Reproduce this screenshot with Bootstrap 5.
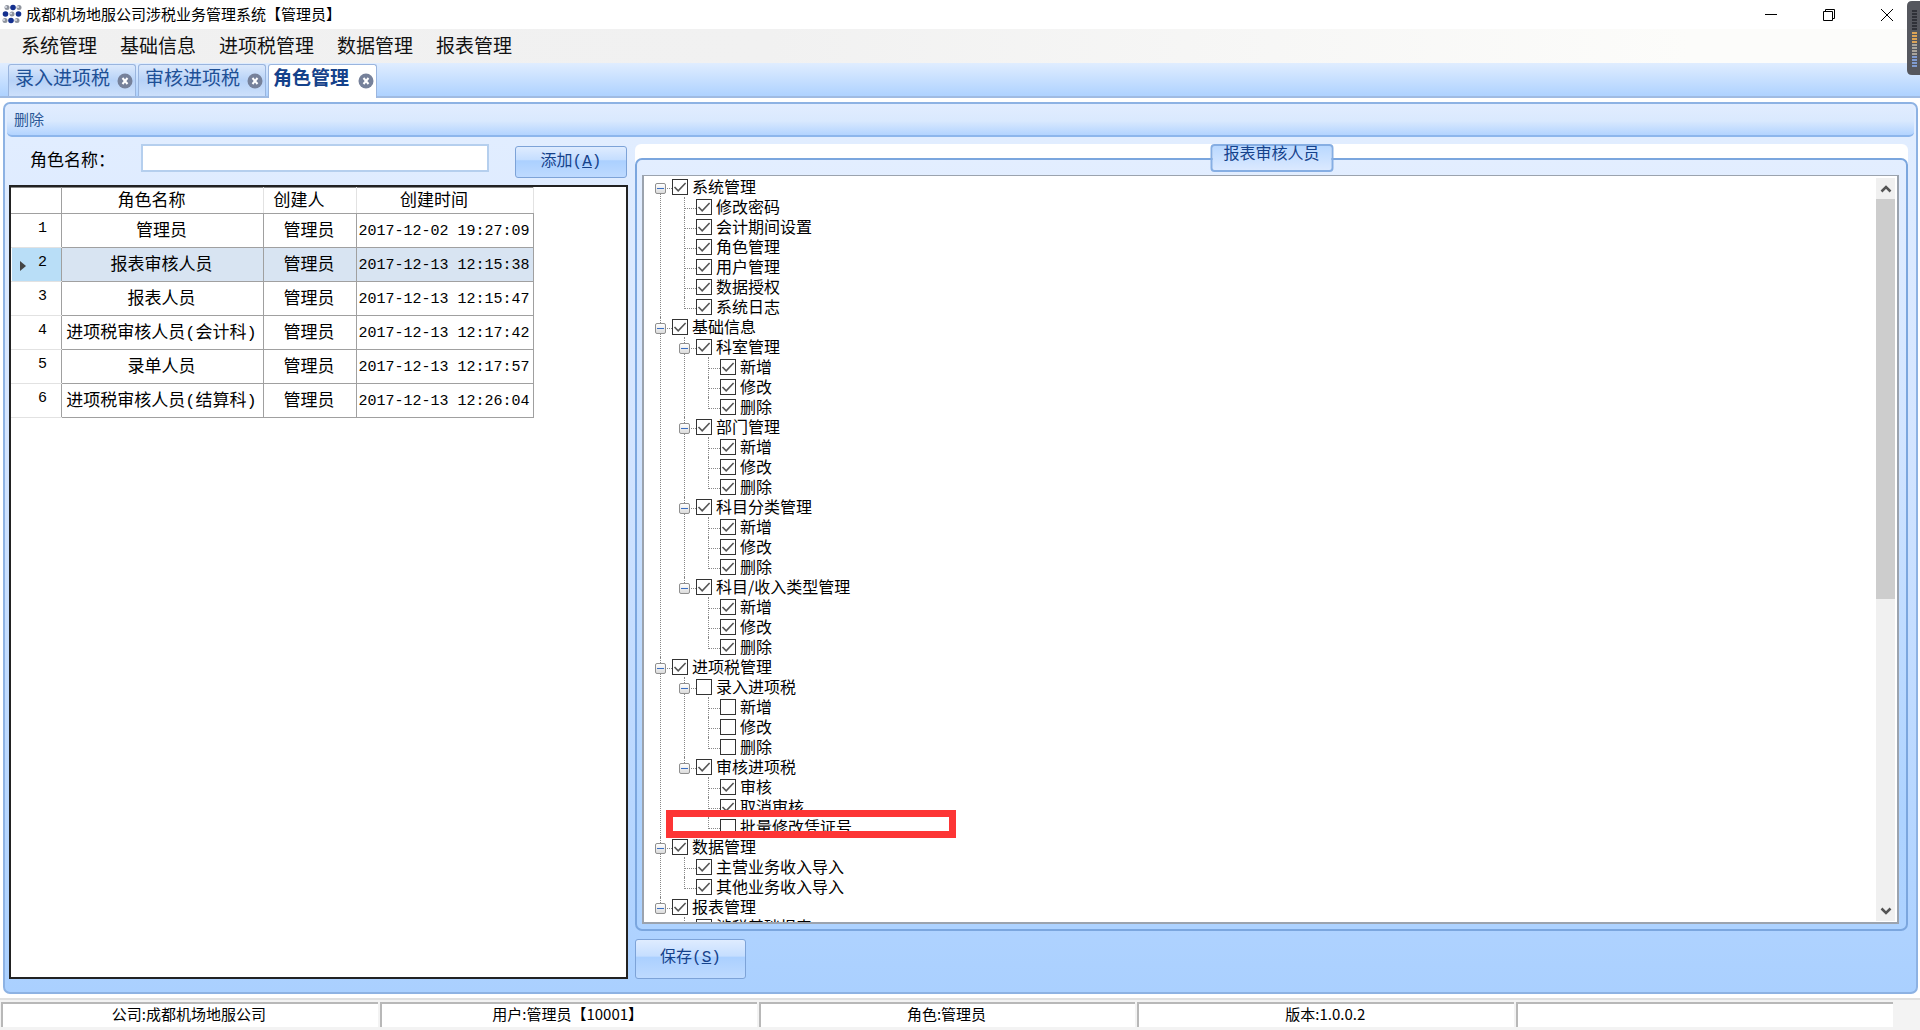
<!DOCTYPE html>
<html lang="zh-CN">
<head>
<meta charset="utf-8">
<meta name="viewport" content="width=device-width, initial-scale=1">
<title>成都机场地服公司涉税业务管理系统</title>
<link href="https://cdn.jsdelivr.net/npm/bootstrap@5.3.0/dist/css/bootstrap.min.css" rel="stylesheet">
<style>
:root{--edge:#8db2e3;--ink:#15428b}
body{font-family:"Noto Sans CJK SC",sans-serif;font-size:16px;line-height:20px;color:#000;background:#fff;height:100vh;overflow:hidden}
button,input{font-family:inherit}
.titlebar{height:29px;font-size:15px;padding:0 4px 2px 2px}
.win-btn{width:58px;height:27px;border:0;background:none;padding:0}
.menubar{height:34px;font-size:19px;line-height:32px;background:linear-gradient(90deg,#f0f0f0 0,#f1f1f1 40%,#fcfcfa 88%);padding-left:10px}
.menubar a{color:#111;padding:0 12px 0 11px}
.tabstrip{height:35px;background:linear-gradient(#e0edff,#aed2ff);border-bottom:2px solid #a0bbe2;padding:1px 8px 0;gap:2px}
.doc-tab{height:34px;padding:0 2px 0 6px;margin-bottom:-2px;border:1px solid #9ab5de;border-bottom:0;border-radius:3px 3px 0 0;background:linear-gradient(#dce9fc,#b7d2f7 50%,#cde0fb);background-clip:padding-box;color:#1e5096;font-size:19px;line-height:24px;gap:7px}
.doc-tab:not(.active){height:32px;margin-bottom:0}
.doc-tab a{color:inherit}
.doc-tab.active{background:#fff;color:var(--ink);font-weight:700;padding-left:4px;gap:9px}
.tab-x{width:16px;height:16px;border:0;background:none;padding:0;margin-top:8px;line-height:0}
.workspace{margin:4px 2px 4px 3px;border:2px solid var(--edge);border-radius:7px;background:linear-gradient(#e1edff 4%,#d6e6ff 35%,#b6d6ff 82%,#aad0ff)}
.toolbar{height:33px;margin-left:2px;margin-right:2px;background:linear-gradient(#e2edff,#d9e9fe 55%,#b3d4ff);border-bottom:2px solid #8db6ec;border-radius:5px;padding:0 7px;line-height:30px;font-size:15px}
.toolbar a{color:#2a5896}
.panes{padding:7px 8px 13px 4px;gap:7px}
.pane-left{flex:0 0 619px;min-width:0}
.add-row{padding:0 1px 8px 21px;height:41px}
.add-row label{font-size:17px;width:111px;line-height:29px}
.name-box{width:348px;height:28px;border:2px solid #b5cfee;border-radius:0;padding:0 6px}
.glass{border:1px solid #7da3d8;border-radius:3px;background:linear-gradient(#dfecff,#c5deff 42%,#abd0ff 46%,#bedaff);color:var(--ink);font-family:"Liberation Mono","Noto Sans CJK SC",monospace;font-size:16px;padding:0}
.glass:hover{border-color:#5c8acb;color:var(--ink)}
.add-btn{width:112px;height:32px;margin-top:2px}
.save-btn{width:111px;height:40px;padding-bottom:2px}
.grid-box{background:#fff;border:2px solid #222}
.roles{width:522px;table-layout:fixed;font-family:"Liberation Mono","Noto Sans CJK SC",monospace;font-size:17px;line-height:20px;margin:0;border-collapse:collapse}
.roles th,.roles td{padding:2px 2px 0 0;text-align:center;vertical-align:middle;border:1px solid #a0a0a0;font-weight:400;white-space:nowrap}
.roles thead th{height:26px;border-color:#e2e2e2;border-top-color:#888;border-bottom-color:#a0a0a0;padding-right:22px}
.roles tbody tr{height:34px}
.roles tbody th{border-color:#e2e2e2 #a0a0a0 #e2e2e2 #fff;font-size:15px;padding:0 0 4px 12px;position:relative}
.roles thead th:first-child{border-left-color:#fff;border-right-color:#a0a0a0}
.roles .stamp{font-size:15px}
.roles .picked td{background:#d8e4f2}
.roles .picked th{background:#b9def7}
.row-arrow{position:absolute;left:7px;top:12px}
.group-wrap{background:linear-gradient(#fff,#fff) top/100% 20px no-repeat;border-radius:6px 6px 0 0;padding-top:14px;position:relative;min-height:0}
.group-box{border:2px solid #7ba6de;border-radius:7px;background:linear-gradient(#e3eeff,#d3e5ff 35%,#aed3ff 85%,#add2ff);padding:15px 7px 5px 5px}
.group-name{position:absolute;top:0;left:50%;transform:translateX(-50%);width:123px;height:28px;text-align:center;border:2px solid #86aee3;border-radius:4px;background:linear-gradient(#b9d8ff,#dbe9ff);color:var(--ink);line-height:13px;font-size:16px}
.tree-box{background:#fff;border:2px solid #9ba3ae;border-top-width:1px}
.tree-view{overflow:hidden;padding:1px 0 0 11px}
.tree-view ul{list-style:none;margin:0;padding:0}
.tree-view ul ul{margin-left:24px}
.tree-view li{position:relative}
.tree-view li::before{content:"";position:absolute;left:5px;top:0;bottom:0;border-left:1px dotted #888}
.tree-view li:last-child::before{bottom:auto;height:12px}
.tree-view>ul>li:first-child::before{top:10px}
.node{height:20px}
.node::before{content:"";position:absolute;left:6px;top:11px;width:11px;border-top:1px dotted #888}
.node label{line-height:18px;padding-bottom:2px}
.twist{position:relative;width:11px;height:11px;margin:2px 6px 0 0;border:1px solid #8f8f8f;border-radius:2px;background:linear-gradient(#fff,#dcdcdc);padding:0}
.twist::after{content:"";position:absolute;left:1px;right:1px;top:4px;height:1px;background:#3b6fc4}
.leaf{width:11px;margin-right:6px}
.node .form-check-input{width:16px;height:16px;margin:0 4px 0 0;border:1px solid #333;border-radius:0;background-color:#fff;flex:none}
.node .form-check-input:checked{background-color:#fff;border-color:#333;background-image:url("data:image/svg+xml,%3Csvg xmlns='http://www.w3.org/2000/svg' viewBox='0 0 14 14'%3E%3Cpath d='M1.5 7l3.7 3.8L12.6 3' fill='none' stroke='%23555' stroke-width='1.6'/%3E%3C/svg%3E")}
.red-frame{position:absolute;left:-37px;top:-7px;width:290px;height:28px;border:7px solid #fd3535;z-index:2;pointer-events:none}
.scroll-rail{width:19px;background:#f0f0f0;margin:2px 2px 1px 0}
.scroll-rail button{height:21px;border:0;background:none;padding:0;line-height:0}
.scroll-thumb{height:57%;background:#cdcdcd}
.statusbar{height:32px;background:#f3f3f3;border-top:2px solid #e0e0e0;padding:2px 27px 3px 1px;gap:2px;font-size:15px;line-height:20px}
.stat-cell{flex:1 1 0;background:#fff;border-top:2px solid #b8b8b8;border-left:2px solid #b8b8b8;text-align:center;padding-right:3px}
.meter{position:absolute;right:0;top:1px;z-index:3}
</style>
<script src="https://cdn.jsdelivr.net/npm/bootstrap@5.3.0/dist/js/bootstrap.bundle.min.js"></script>
</head>
<body class="d-flex flex-column">
<header class="titlebar d-flex align-items-center flex-shrink-0">
  <svg width="20" height="20" viewBox="0 0 20 20" class="me-1" aria-hidden="true">
    <g fill="#8f949e"><circle cx="5" cy="3.500" r="2.500"/><circle cx="17" cy="3.500" r="2.500"/><circle cx="10" cy="10" r="2.500"/><circle cx="3" cy="16.500" r="2.500"/><circle cx="15" cy="16.500" r="2.500"/></g>
    <g fill="#14308f"><circle cx="11" cy="3.500" r="2.800"/><circle cx="3.500" cy="10" r="2.800"/><circle cx="16.500" cy="10" r="2.800"/><circle cx="9" cy="16.500" r="2.800"/></g>
    <g fill="#dfe3ee"><circle cx="4" cy="3" r="1"/><circle cx="16" cy="3" r="1"/><circle cx="9" cy="9.500" r="1"/><circle cx="2" cy="16" r="1"/><circle cx="14" cy="16" r="1"/></g>
  </svg>
  <span>成都机场地服公司涉税业务管理系统【管理员】</span>
  <div class="ms-auto d-flex">
    <button class="win-btn" type="button" aria-label="最小化"><svg width="14" height="14"><path d="M1 6.500h12" stroke="#000"/></svg></button>
    <button class="win-btn" type="button" aria-label="还原"><svg width="14" height="14" fill="none" stroke="#000"><path d="M1.500 3.500h9v9h-9zM3.500 3.500v-2h9v9h-2"/></svg></button>
    <button class="win-btn" type="button" aria-label="关闭"><svg width="14" height="14"><path d="M1 1l12 12M13 1L1 13" stroke="#000"/></svg></button>
  </div>
</header>
<nav class="menubar d-flex flex-shrink-0">
  <a class="text-decoration-none" href="#">系统管理</a><a class="text-decoration-none" href="#">基础信息</a><a class="text-decoration-none" href="#">进项税管理</a><a class="text-decoration-none" href="#">数据管理</a><a class="text-decoration-none" href="#">报表管理</a>
</nav>
<div class="tabstrip d-flex flex-shrink-0">
  <div class="doc-tab d-flex"><a class="text-decoration-none" href="#">录入进项税</a><button class="tab-x" type="button" aria-label="关闭"><svg width="16" height="16"><circle cx="8" cy="8" r="7.500" fill="#76819a"/><path d="M5.500 5l5 6M10.500 5l-5 6" stroke="#fff" stroke-width="2"/></svg></button></div>
  <div class="doc-tab d-flex"><a class="text-decoration-none" href="#">审核进项税</a><button class="tab-x" type="button" aria-label="关闭"><svg width="16" height="16"><circle cx="8" cy="8" r="7.500" fill="#76819a"/><path d="M5.500 5l5 6M10.500 5l-5 6" stroke="#fff" stroke-width="2"/></svg></button></div>
  <div class="doc-tab active d-flex"><a class="text-decoration-none" href="#">角色管理</a><button class="tab-x" type="button" aria-label="关闭"><svg width="16" height="16"><circle cx="8" cy="8" r="7.500" fill="#76819a"/><path d="M5.500 5l5 6M10.500 5l-5 6" stroke="#fff" stroke-width="2"/></svg></button></div>
</div>

<main class="workspace d-flex flex-column flex-grow-1 overflow-hidden">
  <div class="toolbar flex-shrink-0"><a class="text-decoration-none" href="#">删除</a></div>
  <div class="panes d-flex flex-grow-1 overflow-hidden">
    <section class="pane-left d-flex flex-column">
      <form class="add-row d-flex flex-shrink-0">
        <label for="roleName">角色名称：</label>
        <input id="roleName" class="name-box" type="text">
        <button class="btn glass add-btn ms-auto" type="button">添加(<u>A</u>)</button>
      </form>
      <div class="grid-box flex-grow-1">
        <table class="roles">
          <colgroup><col style="width:50px"><col style="width:202px"><col style="width:93px"><col style="width:177px"></colgroup>
          <thead><tr><th scope="col"></th><th scope="col">角色名称</th><th scope="col">创建人</th><th scope="col">创建时间</th></tr></thead>
          <tbody>
            <tr><th scope="row">1</th><td>管理员</td><td>管理员</td><td class="stamp">2017-12-02 19:27:09</td></tr>
            <tr class="picked"><th scope="row"><svg class="row-arrow" width="8" height="12" aria-hidden="true"><path d="M1 1l6 5-6 5z" fill="#444"/></svg>2</th><td>报表审核人员</td><td>管理员</td><td class="stamp">2017-12-13 12:15:38</td></tr>
            <tr><th scope="row">3</th><td>报表人员</td><td>管理员</td><td class="stamp">2017-12-13 12:15:47</td></tr>
            <tr><th scope="row">4</th><td>进项税审核人员(会计科)</td><td>管理员</td><td class="stamp">2017-12-13 12:17:42</td></tr>
            <tr><th scope="row">5</th><td>录单人员</td><td>管理员</td><td class="stamp">2017-12-13 12:17:57</td></tr>
            <tr><th scope="row">6</th><td>进项税审核人员(结算科)</td><td>管理员</td><td class="stamp">2017-12-13 12:26:04</td></tr>
          </tbody>
        </table>
      </div>
    </section>
    <section class="d-flex flex-column flex-grow-1">
      <div class="group-wrap d-flex flex-column flex-grow-1 mb-2">
        <div class="group-box d-flex flex-column flex-grow-1 overflow-hidden">
          <div class="tree-box d-flex flex-grow-1 overflow-hidden">
            <div class="tree-view flex-grow-1" id="tree"></div>
            <div class="scroll-rail d-flex flex-column flex-shrink-0">
              <button type="button" aria-label="向上滚动"><svg width="12" height="10"><path d="M1.500 7.500L6 3l4.500 4.500" fill="none" stroke="#555" stroke-width="2.500"/></svg></button>
              <div class="flex-grow-1"><div class="scroll-thumb"></div></div>
              <button type="button" aria-label="向下滚动"><svg width="12" height="10"><path d="M1.500 2.500L6 7l4.500-4.500" fill="none" stroke="#555" stroke-width="2.500"/></svg></button>
            </div>
          </div>
        </div>
        <div class="group-name">报表审核人员</div>
      </div>
      <button class="btn glass save-btn flex-shrink-0" type="button">保存(<u>S</u>)</button>
    </section>
  </div>
</main>

<footer class="statusbar d-flex flex-shrink-0">
  <div class="stat-cell">公司:成都机场地服公司</div>
  <div class="stat-cell">用户:管理员【10001】</div>
  <div class="stat-cell">角色:管理员</div>
  <div class="stat-cell">版本:1.0.0.2</div>
  <div class="stat-cell"></div>
</footer>

<svg class="meter" width="13" height="75" aria-hidden="true">
  <path d="M13 0H5Q0 0 0 5v64q0 5 5 5h8z" fill="#55575e"/>
  <path d="M5 10h5M5 13h5M5 16h5M5 19h5M5 22h5M5 25h5M5 28h5" stroke="#2f3138" stroke-width="2"/>
  <path d="M5 32h5M5 35h5M5 38h5M5 41h5" stroke="#dca356" stroke-width="2"/>
  <path d="M5 44h5M5 47h5M5 50h5M5 53h5" stroke="#aaa59c" stroke-width="2"/>
  <path d="M5 56h5M5 59h5M5 62h5M5 65h5" stroke="#7f9bd0" stroke-width="2"/>
</svg>

<script>
// Each node: [name, checked, children]
const ops = on => [['新增', on], ['修改', on], ['删除', on]];
const menuTree = [
  ['系统管理', 1, [['修改密码', 1], ['会计期间设置', 1], ['角色管理', 1], ['用户管理', 1], ['数据授权', 1], ['系统日志', 1]]],
  ['基础信息', 1, [['科室管理', 1, ops(1)], ['部门管理', 1, ops(1)], ['科目分类管理', 1, ops(1)], ['科目/收入类型管理', 1, ops(1)]]],
  ['进项税管理', 1, [['录入进项税', 0, ops(0)], ['审核进项税', 1, [['审核', 1], ['取消审核', 1], ['批量修改凭证号', 0]]]]],
  ['数据管理', 1, [['主营业务收入导入', 1], ['其他业务收入导入', 1]]],
  ['报表管理', 1, [['涉税基础报表', 1]]]
];
let seq = 0;
function build(nodes) {
  return '<ul>' + nodes.map(([name, on, kids]) => {
    const id = 'node' + (++seq);
    return '<li><div class="node d-flex align-items-center">' +
      (kids ? '<button class="twist flex-shrink-0" type="button" aria-label="折叠"></button>' : '<span class="leaf flex-shrink-0"></span>') +
      `<input class="form-check-input" type="checkbox" id="${id}"${on ? ' checked' : ''}><label for="${id}">${name}</label></div>` +
      (name === '批量修改凭证号' ? '<div class="red-frame"></div>' : '') +
      (kids ? build(kids) : '') + '</li>';
  }).join('') + '</ul>';
}
document.getElementById('tree').innerHTML = build(menuTree);
</script>
</body>
</html>
